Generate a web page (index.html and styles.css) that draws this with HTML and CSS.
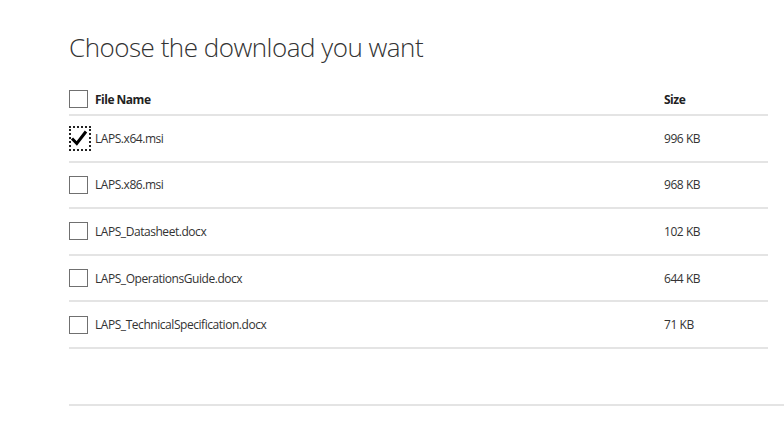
FILE: index.html
```html
<!DOCTYPE html>
<html>
<head>
<meta charset="utf-8">
<link rel="stylesheet" href="styles.css">
</head>
<body>
<div class="page">
  <h1 class="title">Choose the download you want</h1>
  <div class="table">
    <div class="row head">
      <div class="cell name"><span class="box"></span><span class="label">File Name</span></div>
      <div class="cell size">Size</div>
    </div>
    <div class="row">
      <div class="cell name"><span class="box checked"><svg viewBox="0 0 18 18" width="18" height="18"><path d="M2 9.5 L6.8 14.5 L16 2.5" fill="none" stroke="#000" stroke-width="3"/></svg></span><span class="label">LAPS.x64.msi</span></div>
      <div class="cell size">996 KB</div>
    </div>
    <div class="row">
      <div class="cell name"><span class="box"></span><span class="label">LAPS.x86.msi</span></div>
      <div class="cell size">968 KB</div>
    </div>
    <div class="row">
      <div class="cell name"><span class="box"></span><span class="label">LAPS_Datasheet.docx</span></div>
      <div class="cell size">102 KB</div>
    </div>
    <div class="row">
      <div class="cell name"><span class="box"></span><span class="label">LAPS_OperationsGuide.docx</span></div>
      <div class="cell size">644 KB</div>
    </div>
    <div class="row">
      <div class="cell name"><span class="box"></span><span class="label">LAPS_TechnicalSpecification.docx</span></div>
      <div class="cell size">71 KB</div>
    </div>
  </div>
  <div class="footer-line"></div>
</div>
</body>
</html>
```

FILE: styles.css
```css
html, body {
  margin: 0;
  padding: 0;
  background: #fff;
}
body {
  font-family: "Open Sans", "Liberation Sans", sans-serif;
  color: #333;
}
.page {
  padding-left: 69px;
  padding-top: 29px;
}
.title {
  margin: 0;
  font-weight: 300;
  font-size: 26px;
  line-height: 36px;
  color: #333;
  letter-spacing: -0.5px;
}
.table {
  width: 699px;
  margin-top: 19px;
}
.row {
  display: flex;
  align-items: center;
  height: 44.6px;
  border-bottom: 2px solid #e4e4e4;
  font-size: 12px;
  letter-spacing: -0.45px;
}
.row.head {
  height: 30px;
  font-weight: 700;
  color: #222;
  letter-spacing: -0.5px;
}
.cell.name {
  flex: 1;
  display: flex;
  align-items: center;
  gap: 7px;
}
.cell.size {
  width: 104px;
}
.box {
  width: 17px;
  height: 16px;
  border: 1px solid #707070;
  display: inline-block;
  position: relative;
  flex: none;
}
.box.checked {
  border: none;
  width: 19px;
  height: 18px;
}
.box.checked::after {
  content: "";
  position: absolute;
  left: 0;
  top: -3px;
  right: -3px;
  bottom: -4px;
  border: 2px dotted #222;
}
.box.checked svg {
  position: absolute;
  left: 1px;
  top: 0;
}
.footer-line {
  margin-top: 55px;
  height: 2px;
  background: #e4e4e4;
}
```
